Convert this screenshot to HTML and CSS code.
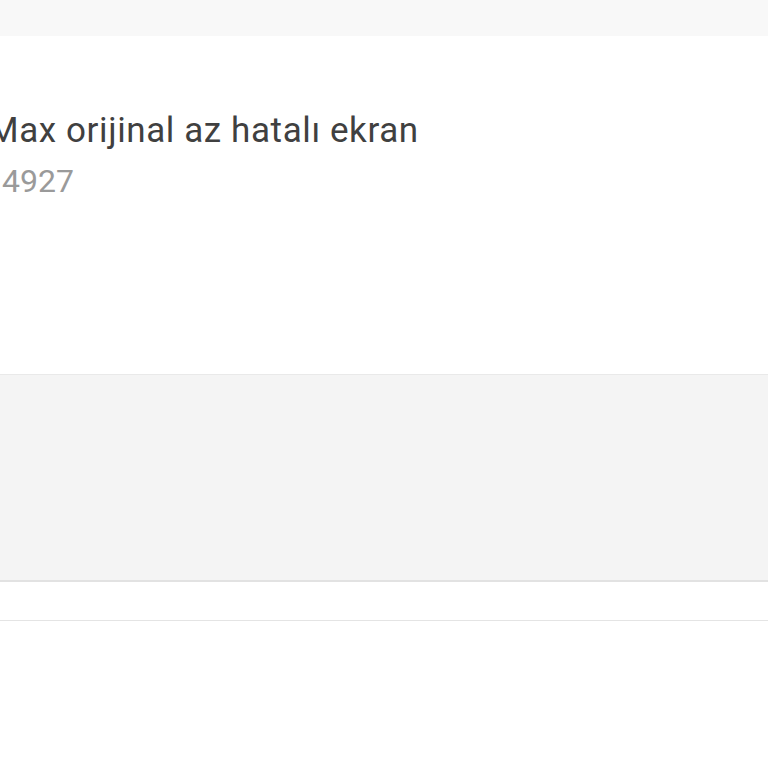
FILE: index.html
```html
<!DOCTYPE html>
<html lang="tr">
<head>
  <meta charset="UTF-8" />
  <meta name="viewport" content="width=device-width, initial-scale=1" />
  <title>Ürün</title>
  <link rel="stylesheet" href="styles.css">
</head>
<body>
  <div class="topbar"></div>

  <div class="product">
    <h1 class="product-title">Max orijinal az hatalı ekran</h1>
    <p class="product-code">4927</p>
  </div>

  <!-- empty info panel -->
  <div class="panel"></div>

  <div class="row"></div>
</body>
</html>
```

FILE: styles.css
```css
* {
  box-sizing: border-box;
}

body {
  margin: 0;
  background: #ffffff;
  font-family: Roboto, "Liberation Sans", sans-serif;
  overflow: hidden;
}

.topbar {
  height: 36px;
  background: #f8f8f8;
}

.product {
  height: 338px;
  padding-top: 75px;
}

.product-title {
  margin: 0 0 0 -12px;
  font-size: 35px;
  font-weight: 400;
  line-height: 40px;
  letter-spacing: 0.6px;
  color: #404040;
  white-space: nowrap;
}

.product-code {
  margin: 12px 0 0 2px;
  font-size: 32px;
  line-height: 36px;
  color: #9a9a9a;
}

.panel {
  height: 208px;
  background: #f4f4f4;
  border-top: 1px solid #e9e9e9;
  border-bottom: 2px solid #e2e2e2;
}

.row {
  height: 39px;
  border-bottom: 1px solid #e4e4e4;
}
```
